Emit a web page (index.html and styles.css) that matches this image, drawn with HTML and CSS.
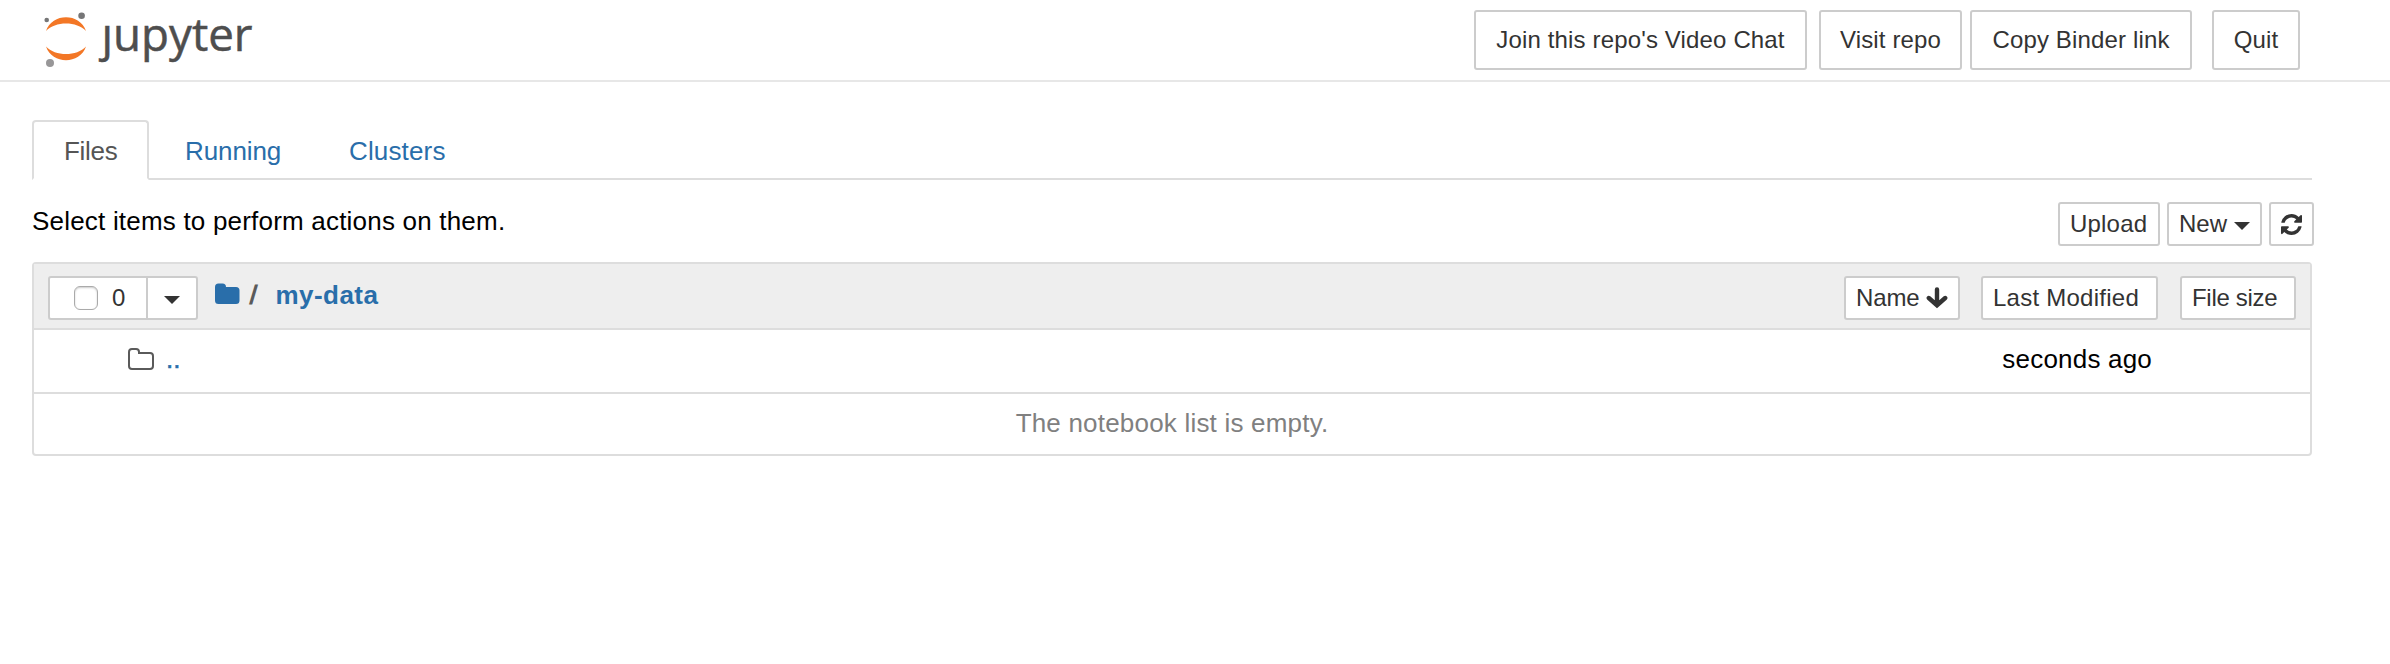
FILE: index.html
```html
<!DOCTYPE html>
<html lang="en">
<head>
<meta charset="utf-8">
<title>my-data/</title>
<link rel="stylesheet" href="styles.css">
</head>
<body>
<header class="header">
  <a class="logo">
    <svg class="logo-mark" width="44" height="56" viewBox="0 0 44 56">
      <path fill="#f37726" d="M2 19C8 .5 36 .5 42 19C33 9 11 9 2 19Z" />
      <path fill="#f37726" d="M2 34.500C11 44.500 33 44.500 42 34.500C36 52.700 8 52.700 2 34.500Z" />
      <circle fill="#767677" cx="2.700" cy="8" r="2.300" />
      <circle fill="#767677" cx="37.600" cy="3.700" r="3.300" />
      <circle fill="#989798" cx="6" cy="51" r="4" />
    </svg>
    <svg class="logo-word" width="160" height="60" viewBox="0 0 160 60">
      <text x="6.500" y="38.500" textLength="151" lengthAdjust="spacingAndGlyphs">ȷupyter</text>
    </svg>
  </a>
  <nav class="header-actions">
    <button class="btn btn-lg btn-chat">Join this repo's Video Chat</button>
    <button class="btn btn-lg btn-visit">Visit repo</button>
    <button class="btn btn-lg btn-copy">Copy Binder link</button>
    <button class="btn btn-lg btn-quit">Quit</button>
  </nav>
</header>
<main class="site">
  <ul class="tabs">
    <li class="tab tab-active"><span>Files</span></li>
    <li class="tab tab-running"><span>Running</span></li>
    <li class="tab tab-clusters"><span>Clusters</span></li>
  </ul>
  <div class="toolbar">
    <p class="hint"><span>Select items to perform actions on them.</span></p>
    <div class="tools">
      <button class="btn btn-upload"><span>Upload</span></button>
      <button class="btn btn-new"><span>New</span><i class="caret"></i></button>
      <button class="btn btn-refresh" aria-label="Refresh">
        <svg width="21" height="21" viewBox="0 0 1536 1536"><path fill="#333" d="M1511 928q0 5-1 7-64 268-268 434.500T764 1536q-146 0-282.500-55T238 1324l-129 129q-19 19-45 19t-45-19-19-45V960q0-26 19-45t45-19h448q26 0 45 19t19 45-19 45l-137 137q71 66 161 102t187 36q134 0 250-65t186-179q11-17 53-117 8-23 30-23h192q13 0 22.500 9.500t9.500 22.500zm25-800v448q0 26-19 45t-45 19h-448q-26 0-45-19t-19-45 19-45l138-138Q969 256 768 256q-134 0-250 65T332 500q-11 17-53 117-8 23-30 23H50q-13 0-22.500-9.500T18 608v-7q65-268 270-434.500T768 0q146 0 284 55.500T1297 212l130-129q19-19 45-19t45 19 19 45z"/></svg>
      </button>
    </div>
  </div>
  <section class="list">
    <div class="list-header">
      <div class="selector">
        <button class="btn btn-check"><i class="checkbox"></i><span>0</span></button>
        <button class="btn btn-drop" aria-label="Select"><i class="caret"></i></button>
      </div>
      <div class="crumbs">
        <svg width="25" height="21" viewBox="0 0 25 21"><path fill="#296eaa" d="M0 4Q0 .5 3.500.5H7.500Q11 .5 11 4H21Q24.500 4 24.500 7.500V17.500Q24.500 21 21 21H3.500Q0 21 0 17.500Z"/></svg>
        <span class="slash">/</span>
        <a class="crumb">my-data</a>
      </div>
      <div class="sorts">
        <button class="btn btn-name"><span>Name</span>
          <svg width="22" height="22" viewBox="0 0 22 22"><path d="M11 2.500V16M2.800 11L11 18.200L19.200 11" fill="none" stroke="#333" stroke-width="4.400" stroke-linecap="round"/></svg>
        </button>
        <button class="btn btn-modified"><span>Last Modified</span></button>
        <button class="btn btn-size"><span>File size</span></button>
      </div>
    </div>
    <div class="row">
      <svg class="folder" width="26" height="22" viewBox="0 0 26 22"><path fill="none" stroke="#5a5a5a" stroke-width="2" d="M1 4Q1 1 4 1H8Q11 1 11 4V5H22Q25 5 25 8V18Q25 21 22 21H4Q1 21 1 18Z"/></svg>
      <a class="parent">..</a>
      <span class="time">seconds ago</span>
    </div>
    <div class="row row-empty"><span>The notebook list is empty.</span></div>
  </section>
</main>
</body>
</html>
```

FILE: styles.css
```css
* { box-sizing: border-box; }
body {
  margin: 0;
  background: #fff;
  color: #000;
  font: 26px/36px "Liberation Sans", Arial, sans-serif;
}
.header {
  display: flex;
  justify-content: space-between;
  height: 82px;
  padding: 10px 90px 0 44px;
  border-bottom: 2px solid #e7e7e7;
}
.logo { display: flex; }
.logo-mark { margin-top: 2px; }
.logo-word { margin: 2px 0 0 7px; overflow: visible; }
.logo-word text { font: 45px "Open Sans", sans-serif; fill: #4e4e4e; stroke: #4e4e4e; stroke-width: .5px; }
.header-actions { display: flex; align-items: flex-start; }
.btn {
  display: flex;
  align-items: center;
  height: 44px;
  padding: 0 10px;
  border: 2px solid #ccc;
  border-radius: 3px;
  background: #fff;
  color: #333;
  font: 24px/36px "Liberation Sans", Arial, sans-serif;
  white-space: nowrap;
}
.btn-lg { height: 60px; justify-content: center; padding: 0; letter-spacing: .15px; }
.btn-chat { width: 333px; margin-right: 12px; }
.btn-visit { width: 143px; margin-right: 8px; }
.btn-copy { width: 222px; margin-right: 20px; }
.btn-quit { width: 88px; }
.site { padding: 38px 78px 0 32px; }
.tabs {
  display: flex;
  height: 60px;
  margin: 0;
  padding: 0;
  list-style: none;
  border-bottom: 2px solid #ddd;
}
.tab { height: 60px; padding-top: 13px; color: #296eaa; }
.tab-active {
  width: 117px;
  padding-left: 30px;
  border: 2px solid #ddd;
  border-bottom-color: #fff;
  border-radius: 4px 4px 0 0;
  padding-top: 11px;
  color: #555;
  letter-spacing: -.3px;
}
.tab-running { margin-left: 36px; width: 164px; letter-spacing: -.1px; }
.tab-clusters { letter-spacing: .15px; }
.toolbar { display: flex; justify-content: space-between; height: 82px; margin-right: -2px; }
.hint { margin: 23px 0 0; letter-spacing: .2px; }
.tools { display: flex; padding-top: 22px; }
.btn-upload { width: 102px; margin-right: 7px; letter-spacing: .2px; }
.btn-new { width: 95px; margin-right: 7px; }
.btn-refresh { width: 45px; padding: 0; justify-content: center; }
.caret {
  border-top: 8px solid #333;
  border-left: 8px solid transparent;
  border-right: 8px solid transparent;
  margin: 4px 0 0 7px;
}
.list { border: 2px solid #ddd; border-radius: 4px; }
.list-header {
  display: flex;
  height: 64px;
  padding: 12px 14px 0;
  background: #eee;
}
.selector { display: flex; }
.btn-check { width: 100px; padding-left: 24px; border-radius: 3px 0 0 3px; }
.checkbox {
  width: 24px;
  height: 24px;
  margin-right: 14px;
  border: 1px solid #aaa;
  border-radius: 6px;
  background: #fff;
  box-shadow: inset 0 1px 2px #ccc;
}
.btn-drop { width: 52px; margin-left: -2px; padding-left: 9px; border-radius: 0 3px 3px 0; }
.crumbs { display: flex; margin-left: 17px; color: #5a5a5a; font-weight: bold; }
.crumbs svg { margin-top: 7px; }
.slash { margin: 1px 0 0 9px; font-size: 27px; transform: skewX(-6deg); }
.crumb { margin: 1px 0 0 19px; color: #296eaa; letter-spacing: .45px; }
.sorts { display: flex; margin-left: auto; }
.btn-name { width: 116px; margin-right: 21px; letter-spacing: -.1px; }
.btn-name svg { margin-left: 6px; }
.btn-modified { width: 177px; margin-right: 22px; letter-spacing: .25px; }
.btn-size { width: 116px; letter-spacing: -.3px; }
.row {
  display: flex;
  height: 64px;
  padding: 11px 158px 0 94px;
  border-top: 2px solid #ddd;
}
.folder { margin-top: 7px; }
.parent { margin-left: 12px; color: #296eaa; -webkit-text-stroke: .5px #296eaa; }
.time { margin-left: auto; letter-spacing: .2px; }
.row-empty { height: 62px; padding: 11px 0 0; justify-content: center; color: #808080; letter-spacing: .2px; }
```
